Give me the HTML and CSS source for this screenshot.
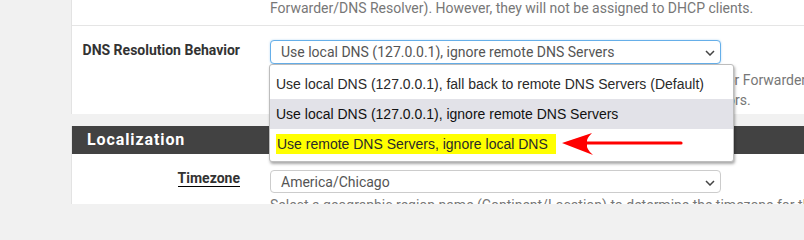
FILE: index.html
```html
<!DOCTYPE html>
<html>
<head>
<meta charset="utf-8">
<link rel="stylesheet" href="styles.css">
</head>
<body>
<div class="page">
  <div class="panel panel-top">
    <div class="row row-first">
      <div class="label"></div>
      <div class="control">
        <div class="help help-first">Forwarder/DNS Resolver). However, they will not be assigned to DHCP clients.</div>
      </div>
    </div>
    <div class="row row-dns">
      <div class="label">DNS Resolution Behavior</div>
      <div class="control">
        <div class="select focused">
          <span class="select-text">Use local DNS (127.0.0.1), ignore remote DNS Servers</span>
          <svg class="chevron" width="10" height="6" viewBox="0 0 10 6"><path d="M1 1 L5 5 L9 1" fill="none" stroke="#444" stroke-width="1.5"/></svg>
        </div>
        <div class="help help-dns">By default the firewall will use local DNS service (127.0.0.1, DNS Resolver or Forwarder) as the first DNS Server when possible, and it will fall back to<br>remote DNS servers otherwise. Use this option to choose alternate behaviors.</div>
        <div class="dropdown">
          <div class="option">Use local DNS (127.0.0.1), fall back to remote DNS Servers (Default)</div>
          <div class="option option-hover">Use local DNS (127.0.0.1), ignore remote DNS Servers</div>
          <div class="option"><span class="mark">Use remote DNS Servers, ignore local DNS</span></div>
        </div>
      </div>
    </div>
  </div>

  <div class="panel panel-loc">
    <div class="panel-heading">Localization</div>
    <div class="row row-tz">
      <div class="label"><span class="abbr">Timezone</span></div>
      <div class="control">
        <div class="select">
          <span class="select-text">America/Chicago</span>
          <svg class="chevron" width="10" height="6" viewBox="0 0 10 6"><path d="M1 1 L5 5 L9 1" fill="none" stroke="#444" stroke-width="1.5"/></svg>
        </div>
        <div class="help help-tz">Select a geographic region name (Continent/Location) to determine the timezone for the firewall.</div>
      </div>
    </div>
  </div>
</div>
<svg class="arrow" width="135" height="30" viewBox="0 0 135 30">
  <line x1="30" y1="15" x2="126" y2="15" stroke="#ff0000" stroke-width="3.2" stroke-linecap="round"/>
  <path d="M7 15 L37 5 Q31 11 32 14 L32 16 Q31 21 38 27 Z" fill="#ff0000"/>
</svg>
</body>
</html>
```

FILE: styles.css
```css
html, body {
  margin: 0;
  padding: 0;
}
html {
  height: 204px;
  overflow: hidden;
}
body {
  background: #f1f1f1;
  font-family: Roboto, "Liberation Sans", sans-serif;
  font-size: 14px;
  color: #333;
  width: 804px;
  height: 204px;
  overflow: hidden;
  position: relative;
}
.page {
  margin-left: 71px;
  width: 900px;
}
.panel {
  background: #fff;
  border-left: 1px solid #e3e3e3;
}
.row {
  display: flex;
}
.label {
  box-sizing: border-box;
  width: 183px;
  padding-right: 15px;
  text-align: right;
  font-weight: bold;
  color: #333;
  line-height: 20px;
}
.control {
  width: 451px;
  margin-left: 15px;
  position: relative;
}
.help {
  color: #777;
  line-height: 20px;
  white-space: nowrap;
}
.row-first {
  height: 25px;
  border-bottom: 1px solid #e5e5e5;
}
.help-first {
  margin-top: -2px;
}
.row-dns {
  padding-top: 14px;
  padding-bottom: 4px;
}
.select {
  box-sizing: border-box;
  height: 24px;
  border: 1px solid #ccc;
  border-radius: 4px;
  position: relative;
  display: flex;
  align-items: center;
  padding-left: 10px;
  color: #555;
  background: #fff;
}
.select.focused {
  border-color: #66afe9;
  box-shadow: 0 0 2px rgba(102, 175, 233, 0.5);
}
.chevron {
  position: absolute;
  right: 5px;
  top: 50%;
  margin-top: -2px;
}
.help-dns {
  margin-top: 6px;
}
.dropdown {
  position: absolute;
  left: -1px;
  top: 24px;
  box-sizing: border-box;
  width: 465px;
  height: 98px;
  padding-top: 4px;
  background: #fff;
  border: 1px solid #bdbdbd;
  border-radius: 3px;
  box-shadow: 1px 2px 3px rgba(0, 0, 0, 0.35);
  font-family: "Liberation Sans", Arial, sans-serif;
  font-size: 14px;
  color: #2a2a2a;
}
.option {
  height: 30px;
  line-height: 30px;
  padding-left: 6px;
  white-space: nowrap;
}
.option-hover {
  background: #e2e2e8;
  color: #111;
}
.mark {
  background: #ffff00;
  padding: 2px 8px 2px 1px;
  margin-left: 0;
}
.panel-loc {
  margin-top: 12px;
  height: 80px;
}
.panel-heading {
  height: 28px;
  line-height: 28px;
  background: #424242;
  color: #fff;
  font-weight: bold;
  font-size: 16px;
  letter-spacing: 0.9px;
  padding-left: 15px;
}
.row-tz {
  padding-top: 16px;
}
.row-tz .label {
  line-height: 16px;
}
.abbr {
  display: inline-block;
  border-bottom: 1px solid #000;
}
.row-tz .select {
  height: 23px;
}
.help-tz {
  margin-top: 2px;
}
.arrow {
  position: absolute;
  left: 555px;
  top: 128px;
}
```
